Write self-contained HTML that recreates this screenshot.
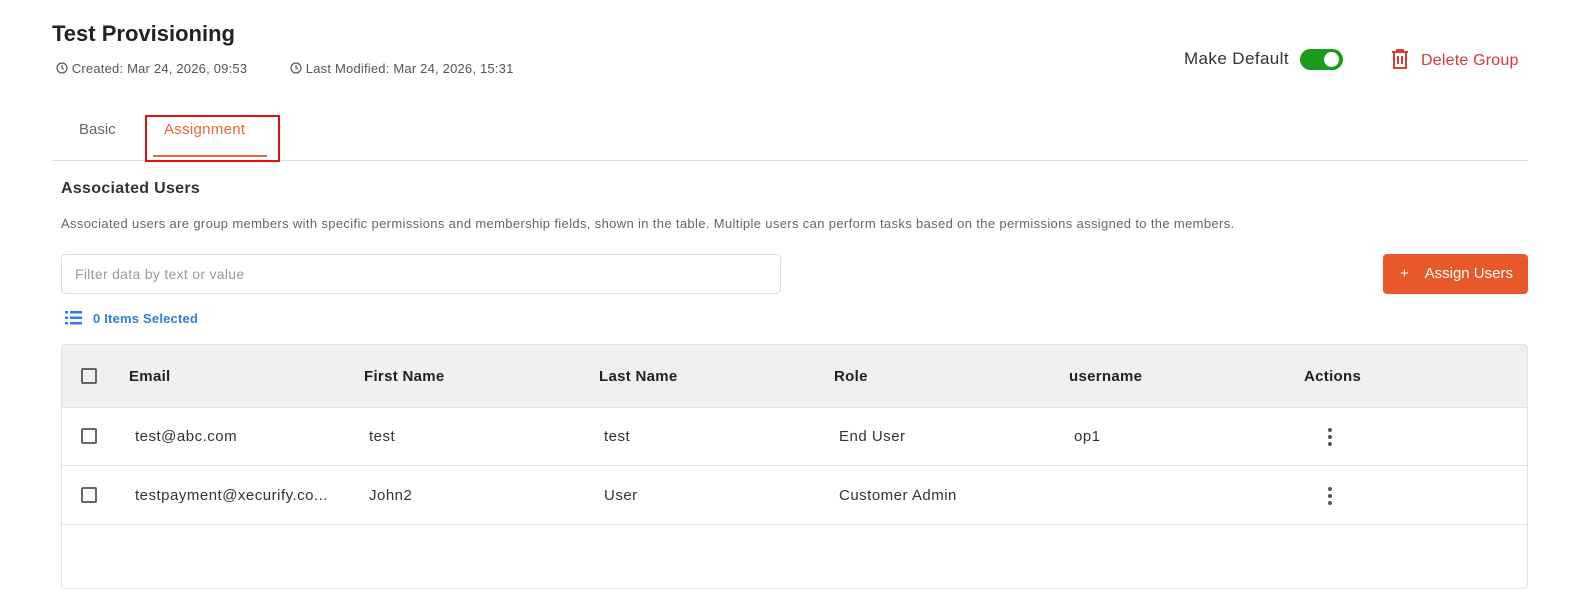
<!DOCTYPE html>
<html><head><style>
*{box-sizing:border-box;margin:0;padding:0}
body{width:1572px;height:581px;background:#fff;font-family:"Liberation Sans",sans-serif;color:#222;position:relative;overflow:hidden}
.a{position:absolute;white-space:nowrap}
.hd{font-weight:bold;font-size:15px;color:#222;letter-spacing:0.3px}
.cell{font-size:15px;color:#333;letter-spacing:0.5px}
.cb{position:absolute;width:16px;height:16px;border:2px solid #666;border-radius:2px}
.dots{position:absolute;width:4px}
.dots i{display:block;width:4px;height:4px;border-radius:2px;background:#555;margin-bottom:3px}
</style></head><body>
<div class="a" style="left:52px;top:21px;font-size:22px;font-weight:bold;color:#222">Test Provisioning</div>
<div class="a" style="left:56px;top:61px;font-size:13px;color:#555;letter-spacing:0.2px">
<svg width="12" height="12" viewBox="0 0 12 12" style="vertical-align:-1px"><circle cx="6" cy="6" r="5" fill="none" stroke="#555" stroke-width="1.2"/><path d="M6 3v3l2 1" fill="none" stroke="#555" stroke-width="1.2"/></svg> Created: Mar 24, 2026, 09:53</div>
<div class="a" style="left:290px;top:61px;font-size:13px;color:#555;letter-spacing:0.2px">
<svg width="12" height="12" viewBox="0 0 12 12" style="vertical-align:-1px"><circle cx="6" cy="6" r="5" fill="none" stroke="#555" stroke-width="1.2"/><path d="M6 3v3l2 1" fill="none" stroke="#555" stroke-width="1.2"/></svg> Last Modified: Mar 24, 2026, 15:31</div>
<div class="a" style="left:1184px;top:49px;font-size:17px;color:#333;letter-spacing:0.4px">Make Default</div>
<div class="a" style="left:1300px;top:49px;width:43px;height:21px;border-radius:11px;background:#1a9a1a"><div style="position:absolute;right:4px;top:3px;width:15px;height:15px;border-radius:50%;background:#fff"></div></div>
<svg class="a" style="left:1391px;top:49px" width="18" height="21" viewBox="0 0 18 21"><path d="M1 3h16M6 3V1h6v2M3 3v16h12V3M7 7v8M11 7v8" fill="none" stroke="#d43a3a" stroke-width="2"/></svg>
<div class="a" style="left:1421px;top:52px;font-size:16px;color:#d43a3a;letter-spacing:0.2px">Delete Group</div>
<div class="a" style="left:79px;top:121px;font-size:15px;color:#666">Basic</div>
<div class="a" style="left:164px;top:121px;font-size:15px;color:#e8643a;letter-spacing:0.3px">Assignment</div>
<div class="a" style="left:52px;top:160px;width:1476px;height:1px;background:#ddd"></div>
<div class="a" style="left:153px;top:155px;width:114px;height:2px;background:#e8643a"></div>
<div class="a" style="left:145px;top:115px;width:135px;height:47px;border:2px solid #e01010"></div>
<div class="a" style="left:61px;top:180px;font-size:16px;font-weight:bold;color:#333;letter-spacing:0.3px">Associated Users</div>
<div class="a" style="left:61px;top:216px;font-size:13px;color:#666;letter-spacing:0.35px">Associated users are group members with specific permissions and membership fields, shown in the table. Multiple users can perform tasks based on the permissions assigned to the members.</div>
<div class="a" style="left:61px;top:254px;width:720px;height:40px;border:1px solid #ddd;border-radius:5px;font-size:14px;color:#999;padding:11px 13px;letter-spacing:0.3px">Filter data by text or value</div>
<div class="a" style="left:1383px;top:254px;width:145px;height:40px;border-radius:4px;background:#e8582a;color:#fff;font-size:15px;padding:11px 0 0 17px">+&nbsp;&nbsp;&nbsp; Assign Users</div>
<svg class="a" style="left:65px;top:311px" width="17" height="14" viewBox="0 0 17 14"><g fill="#2f7de1"><rect x="0" y="0" width="3" height="2.5"/><rect x="5" y="0" width="12" height="2.5"/><rect x="0" y="5.5" width="3" height="2.5"/><rect x="5" y="5.5" width="12" height="2.5"/><rect x="0" y="11" width="3" height="2.5"/><rect x="5" y="11" width="12" height="2.5"/></g></svg>
<div class="a" style="left:93px;top:311px;font-size:13px;font-weight:bold;color:#2f7de1;letter-spacing:0.2px">0 Items Selected</div>
<div class="a" style="left:61px;top:344px;width:1467px;height:245px;border:1px solid #e2e2e2;border-radius:4px;overflow:hidden">
<div style="height:63px;background:#f0f0f0;border-bottom:1px solid #e2e2e2"></div>
<div style="height:58px;border-bottom:1px solid #e2e2e2"></div>
<div style="height:59px;border-bottom:1px solid #e2e2e2"></div>
</div>
<div class="cb" style="left:81px;top:368px"></div>
<div class="a hd" style="left:129px;top:368px">Email</div>
<div class="a hd" style="left:364px;top:368px">First Name</div>
<div class="a hd" style="left:599px;top:368px">Last Name</div>
<div class="a hd" style="left:834px;top:368px">Role</div>
<div class="a hd" style="left:1069px;top:368px">username</div>
<div class="a hd" style="left:1304px;top:368px">Actions</div>
<div class="cb" style="left:81px;top:428px"></div>
<div class="a cell" style="left:135px;top:428px">test@abc.com</div>
<div class="a cell" style="left:369px;top:428px">test</div>
<div class="a cell" style="left:604px;top:428px">test</div>
<div class="a cell" style="left:839px;top:428px">End User</div>
<div class="a cell" style="left:1074px;top:428px">op1</div>
<div class="dots" style="left:1328px;top:428px"><i></i><i></i><i></i></div>
<div class="cb" style="left:81px;top:487px"></div>
<div class="a cell" style="left:135px;top:487px">testpayment@xecurify.co...</div>
<div class="a cell" style="left:369px;top:487px">John2</div>
<div class="a cell" style="left:604px;top:487px">User</div>
<div class="a cell" style="left:839px;top:487px">Customer Admin</div>
<div class="dots" style="left:1328px;top:487px"><i></i><i></i><i></i></div>
</body></html>
